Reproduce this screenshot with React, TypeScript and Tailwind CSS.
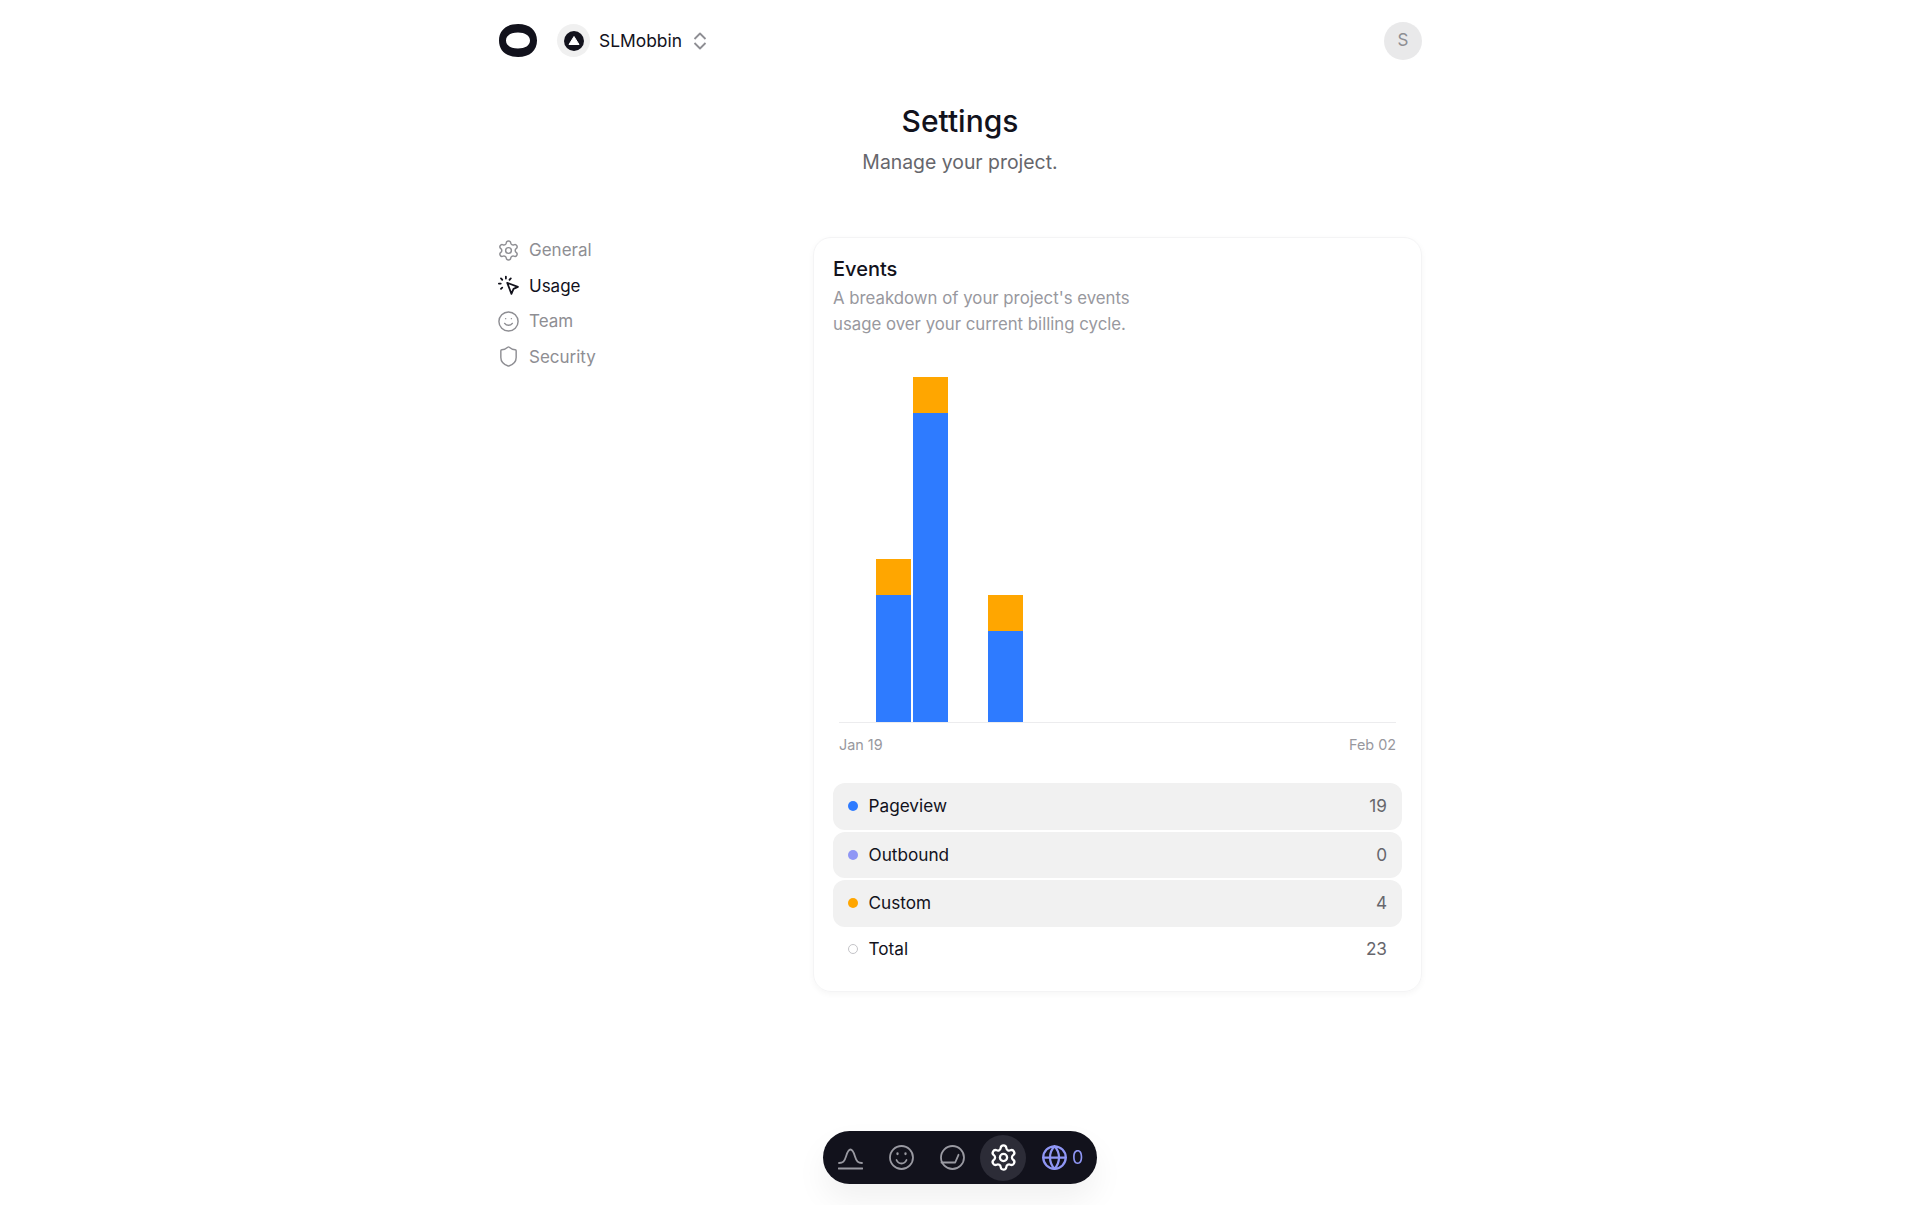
import { Globe, Settings, Shield, Smile } from "lucide-react";

const navItems = [
  { label: "General", icon: "gear" },
  { label: "Usage", icon: "cursor", active: true },
  { label: "Team", icon: "smile" },
  { label: "Security", icon: "shield" },
];

const rows = [
  { label: "Pageview", value: "19", dot: "bg-[#2e7bff]" },
  { label: "Outbound", value: "0", dot: "bg-[#8f96f5]" },
  { label: "Custom", value: "4", dot: "bg-[#ffa600]" },
];

function CursorIcon() {
  return (
    <svg width="23" height="23" viewBox="0 0 22 22" fill="none" stroke="#12121c" strokeWidth="1.7" strokeLinecap="round" strokeLinejoin="round">
      <path d="M9.800 8.500 20 12.300 15.800 14.200 13.800 19Z" />
      <path d="M8.500 2.500v1.800M3.800 4.300l1.200 1.200M13.200 4.300l-1.200 1.200M1.800 9.200h1.800M3.800 14.200l1.200-1.200" />
    </svg>
  );
}

function NavIcon({ name }: { name: string }) {
  if (name === "gear") return <Settings size={23} strokeWidth={1.5} />;
  if (name === "cursor") return <CursorIcon />;
  if (name === "smile") return <Smile size={23} strokeWidth={1.5} />;
  return <Shield size={23} strokeWidth={1.5} />;
}

function Chart() {
  const bars = [
    null,
    { blue: 127, orange: 36 },
    { blue: 309, orange: 36 },
    null,
    { blue: 91, orange: 36 },
  ];
  const slots = Array.from({ length: 15 }, (_, i) => bars[i] ?? null);

  return (
    <div className="mt-[40px] ml-[6px] mr-[6px]">
      <div className="grid grid-cols-[repeat(15,1fr)] h-[346px] items-end border-b border-[#ececee]">
        {slots.map((bar, i) => (
          <div key={i} className="flex flex-col pr-[2px]">
            {bar && (
              <>
                <div className="bg-[#ffa600]" style={{ height: bar.orange }} />
                <div className="bg-[#2e7bff]" style={{ height: bar.blue }} />
              </>
            )}
          </div>
        ))}
      </div>
      <div className="flex justify-between mt-[12px] text-[14.400px] leading-5 text-[#98989e]">
        <span>Jan 19</span>
        <span>Feb 02</span>
      </div>
    </div>
  );
}

function Dock() {
  return (
    <div className="fixed bottom-[21px] left-[823px] w-[274px] h-[53px] rounded-[27px] bg-[#12121c] flex items-center pl-[15px] shadow-[0_16px_32px_rgba(0,0,0,0.06)] text-[#9a9aa2]">
      <svg className="shrink-0" width="25" height="25" viewBox="0 0 25 25" fill="none" stroke="currentColor" strokeWidth="1.800" strokeLinecap="round">
        <path d="M1 18c4 0 5.500-1.500 7-6.500C9.200 7.500 10.500 4.500 12.500 4.500s3.300 3 4.500 7c1.500 5 3 6.500 7 6.500" />
        <path d="M.5 23.500h24" />
      </svg>
      <svg className="shrink-0 ml-[26px]" width="25" height="25" viewBox="0 0 25 25" fill="none" stroke="currentColor" strokeWidth="1.800" strokeLinecap="round">
        <circle cx="12.500" cy="12.500" r="11.500" />
        <path d="M7.500 15c1 2.300 2.800 3.500 5 3.500s4-1.200 5-3.500" />
        <path d="M8.500 8.500v.6M16.500 8.500v.6" strokeWidth="2.300" />
      </svg>
      <svg className="shrink-0 ml-[26px]" width="25" height="25" viewBox="0 0 25 25" fill="none" stroke="currentColor" strokeWidth="1.800" strokeLinecap="round" strokeLinejoin="round">
        <circle cx="12.500" cy="12.500" r="11.500" />
        <path d="M1.500 17.500h13.700l3.300-7.700" />
      </svg>
      <div className="shrink-0 ml-[15px] w-[46px] h-[46px] rounded-full bg-[#2c2c37] flex items-center justify-center text-white">
        <Settings className="shrink-0" size={29} strokeWidth={1.900} />
      </div>
      <div className="ml-[16px] flex items-center text-[#8f96f5]">
        <span className="w-[25px] flex justify-center">
          <Globe className="shrink-0" size={27} strokeWidth={2} />
        </span>
        <span className="ml-[5px] text-[18px] leading-5">0</span>
      </div>
    </div>
  );
}

export default function App() {
  return (
    <div className="min-h-[1205px] bg-white text-[#12121c] font-['Inter',sans-serif]">
      <div className="w-[924px] mx-auto">
        <header className="h-[81px] flex items-center justify-between">
          <div className="flex items-center">
            <svg className="ml-px" width="38" height="33" viewBox="0 0 38 33">
              <path fillRule="evenodd" fill="#12121c" d="M19 0C31 0 38 6.500 38 16.500S31 33 19 33 0 26.500 0 16.500 7 0 19 0ZM19 8.500C12 8.500 7 11.500 7 16.500S12 24.500 19 24.500 31 21.500 31 16.500 26 8.500 19 8.500Z" />
            </svg>
            <div className="ml-[20px] w-[33px] h-[33px] rounded-full bg-[#f0f0f0] flex items-center justify-center">
              <svg width="20" height="20" viewBox="0 0 20 20">
                <circle cx="10" cy="10" r="10" fill="#12121c" />
                <path d="M10 5.500 15 13.500H5Z" fill="#fff" stroke="#fff" strokeLinejoin="round" />
              </svg>
            </div>
            <span className="ml-[9px] text-[17.400px] leading-6">SLMobbin</span>
            <svg className="ml-[11px]" width="14" height="18" viewBox="0 0 14 18" fill="none" stroke="#8e8e93" strokeWidth="1.800" strokeLinejoin="round">
              <path d="M1.500 7 7 1.500 12.500 7" />
              <path d="M1.500 11 7 16.500 12.500 11" />
            </svg>
          </div>
          <div className="w-[38px] h-[38px] rounded-full bg-[#e9e9ea] flex items-center justify-center pt-px text-[17px] text-[#8e8e93]">
            S
          </div>
        </header>

        <div className="text-center mt-[19px]">
          <h1 className="text-[30px] leading-[42px] font-medium">Settings</h1>
          <p className="text-[19.400px] leading-7 text-[#66666c] mt-[6px]">Manage your project.</p>
        </div>

        <div className="flex mt-[61px]">
          <nav className="w-[315px] flex flex-col gap-[11.500px] pt-[2px]">
            {navItems.map((item) => (
              <div
                key={item.label}
                className={`flex items-center gap-[9px] -ml-px h-6 text-[17px] ${item.active ? "text-[#12121c]" : "text-[#8e8e93]"}`}
              >
                <span className="-mt-[2px] shrink-0">
                  <NavIcon name={item.icon} />
                </span>
                <span>{item.label}</span>
              </div>
            ))}
          </nav>

          <section className="w-[609px] h-[755px] rounded-[18px] border border-[#f4f4f5] shadow-[0_2px_6px_rgba(0,0,0,0.04)] px-[19px] pt-[17px]">
            <h2 className="text-[20px] leading-7 font-medium">Events</h2>
            <p className="text-[16.800px] leading-[26px] text-[#98989e] mt-[2px]">
              A breakdown of your project's events
              <br />
              usage over your current billing cycle.
            </p>
            <Chart />
            <div className="mt-[28px] flex flex-col gap-[2px] text-[17.200px]">
              {rows.map((row) => (
                <div key={row.label} className="h-[46.500px] rounded-[12px] bg-[#f1f1f1] flex items-center pl-[15px] pr-[15px]">
                  <span className={`w-[10px] h-[10px] rounded-full ${row.dot}`} />
                  <span className="ml-[10.500px]">{row.label}</span>
                  <span className="ml-auto text-[#66666c]">{row.value}</span>
                </div>
              ))}
              <div className="h-[40px] flex items-center pl-[15px] pr-[15px]">
                <span className="w-[10px] h-[10px] rounded-full border border-[#c4c4c8]" />
                <span className="ml-[10.500px]">Total</span>
                <span className="ml-auto text-[#66666c]">23</span>
              </div>
            </div>
          </section>
        </div>
      </div>
      <Dock />
    </div>
  );
}
